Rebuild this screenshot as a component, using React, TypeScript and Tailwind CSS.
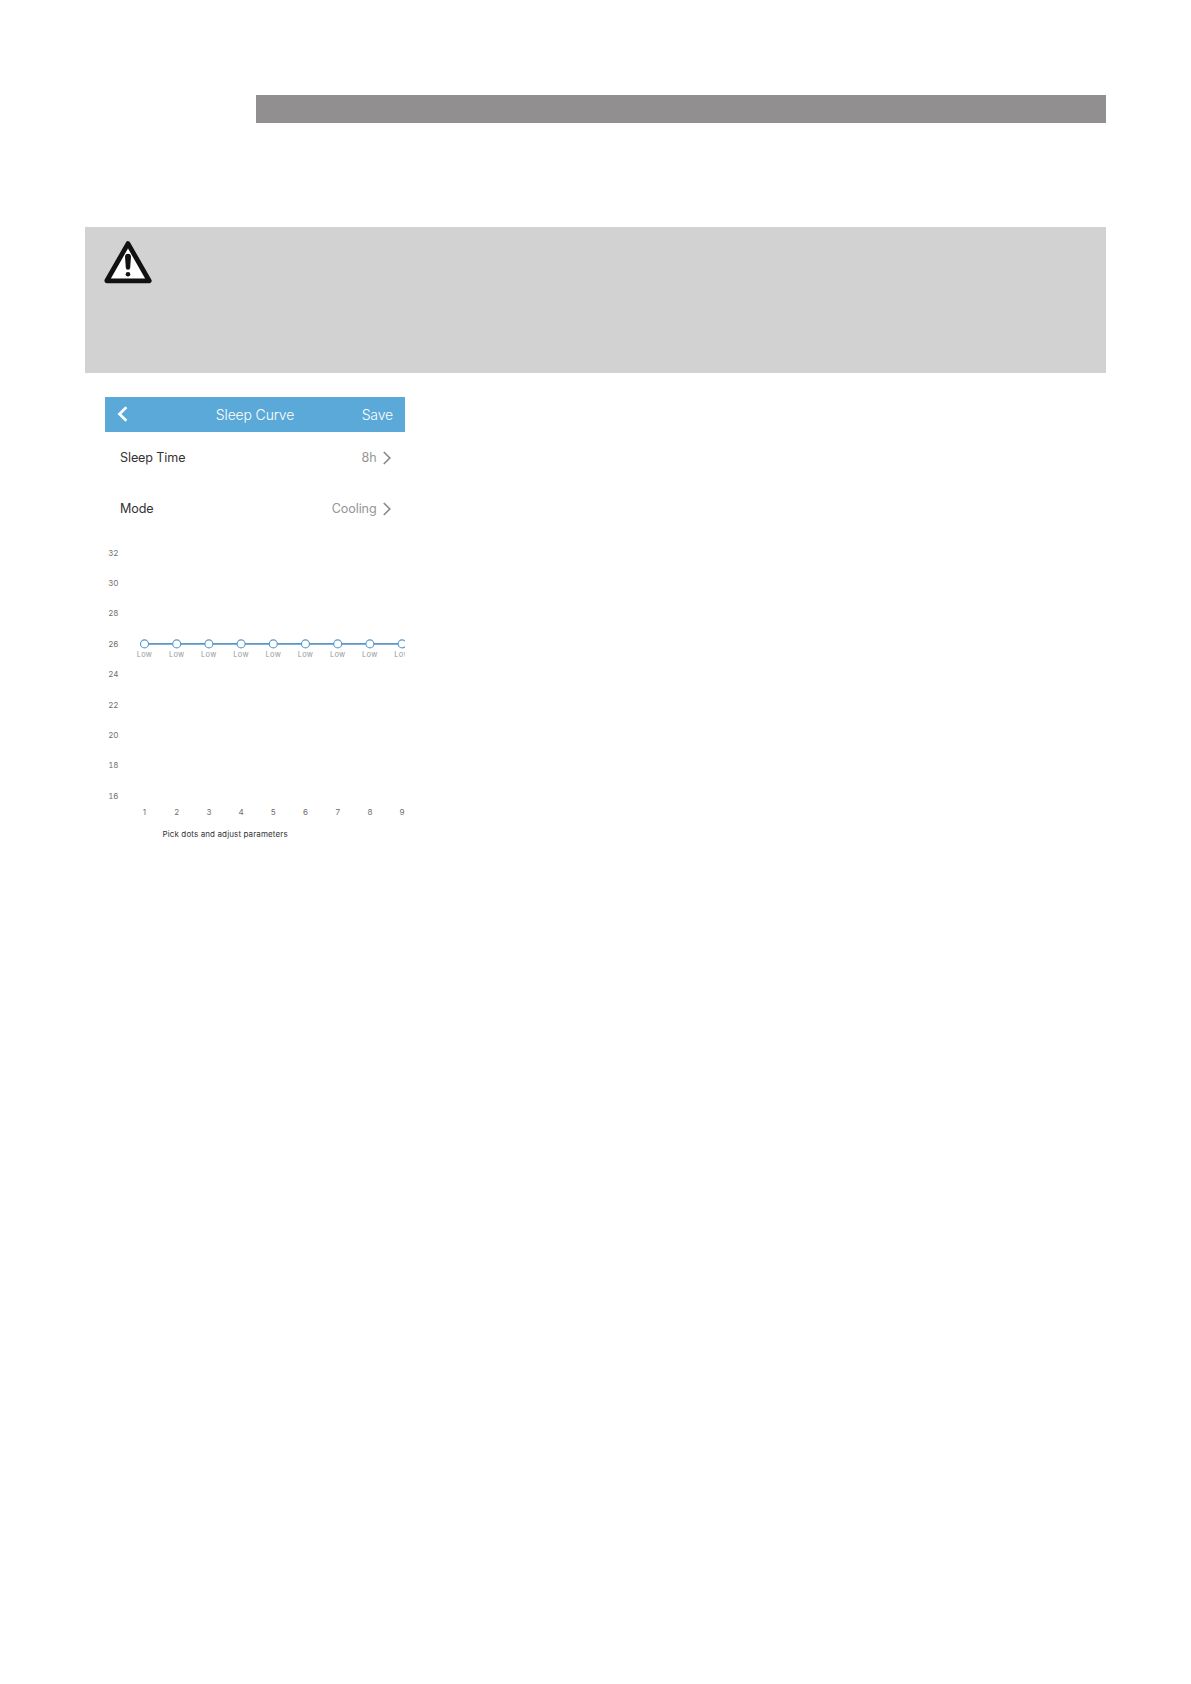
import React from "react";

// --- Inline SVG Icons ---

const WarningIcon: React.FC<{ className?: string }> = ({ className }) => (
  <svg viewBox="0 0 48 43" className={className}>
    <path
      d="M24 2.6L45.2 39.8H2.8Z"
      fill="#fff"
      stroke="#111"
      strokeWidth={4.8}
      strokeLinejoin="round"
    />
    <path
      d="M21 15.8a3 3 0 0 1 6 0L26.2 26.6a2.2 2.2 0 0 1-4.4 0Z"
      fill="#111"
    />
    <circle cx={24} cy={33.2} r={2.3} fill="#111" />
  </svg>
);

const BackIcon: React.FC = () => (
  <svg viewBox="0 0 11 16" className="-mt-px h-4 w-[11px]" fill="none">
    <path d="M9.4 1.2L2.4 8l7 6.8" stroke="#fff" strokeWidth={2.6} />
  </svg>
);

const ChevronIcon: React.FC = () => (
  <svg viewBox="0 0 8 14" className="-mt-px h-3.5 w-2" fill="none">
    <path d="M0.8 1l6 6-6 6" stroke="#8a8a8a" strokeWidth={1.7} />
  </svg>
);

// --- Sub-components ---

interface SettingRowProps {
  label: string;
  value: string;
}

const SettingRow: React.FC<SettingRowProps> = ({ label, value }) => (
  <div className="flex h-[51px] items-center justify-between pr-[14.5px] pl-[15px] text-[12.6px] tracking-[-0.12px]">
    <span className="text-[#333]">{label}</span>
    <span className="flex items-center gap-1.5 text-[#959595]">
      {value}
      <ChevronIcon />
    </span>
  </div>
);

const temperatures = [32, 30, 28, 26, 24, 22, 20, 18, 16];
const hours = [1, 2, 3, 4, 5, 6, 7, 8, 9];

const hourX = (index: number) => 39.5 + index * 32.2;
const tempY = (index: number) => 17.7 + index * 30.4;

const SleepChart: React.FC = () => {
  const lineY = tempY(3);

  return (
    <svg width={300} height={288} viewBox="0 0 300 288" className="block">
      {temperatures.map((temp, i) => (
        <text
          key={temp}
          x={13.5}
          y={tempY(i) + 2.9}
          textAnchor="end"
          fontSize={8}
          fill="#707070"
          className="tabular-nums"
        >
          {temp}
        </text>
      ))}

      <path
        d={`M${hourX(0)} ${lineY}H${hourX(8)}`}
        stroke="#5b96c8"
        strokeWidth={1.8}
      />
      {hours.map((hour, i) => (
        <g key={hour} textAnchor="middle" fontSize={8.1}>
          <circle
            cx={hourX(i)}
            cy={lineY}
            r={4}
            fill="#fafeff"
            stroke="#5b96c8"
            strokeWidth={1.1}
          />
          <text
            x={hourX(i)}
            y={lineY + 12.9}
            fontSize={7.5}
            letterSpacing={0.3}
            fill="#999"
          >
            Low
          </text>
          <text x={hourX(i)} y={280.4} fill="#707070">
            {hour}
          </text>
        </g>
      ))}
    </svg>
  );
};

// --- Sleep Curve screen ---

const SleepCurveScreen: React.FC = () => (
  <div className="w-[300px] overflow-hidden">
    <header className="grid h-[35px] grid-cols-3 items-center bg-[#5ba9d8] pr-3 pl-3 text-[14px] tracking-[-0.15px] text-white">
      <BackIcon />
      <h1 className="text-center font-light whitespace-nowrap">Sleep Curve</h1>
      <span className="text-right font-light">Save</span>
    </header>
    <div className="pt-px">
      <SettingRow label="Sleep Time" value="8h" />
      <SettingRow label="Mode" value="Cooling" />
    </div>
    <SleepChart />
    <p className="pt-[5px] pl-[57.5px] text-[8px] leading-3 tracking-[0.12px] text-[#333]">
      Pick dots and adjust parameters
    </p>
  </div>
);

// --- Main App Component ---

const App: React.FC = () => (
  <div className="min-h-[1684px] w-[1191px] bg-white pt-[95px] pr-[85px] pl-[85px] font-['Inter',sans-serif] antialiased">
    <div className="ml-[171px] h-7 bg-[#918f90]"></div>
    <section className="mt-[104px] h-[146px] bg-[#d2d2d2] pt-3.5 pl-[19px]">
      <WarningIcon className="h-[43px] w-12" />
    </section>
    <main className="mt-6 ml-5">
      <SleepCurveScreen />
    </main>
  </div>
);

export default App;
